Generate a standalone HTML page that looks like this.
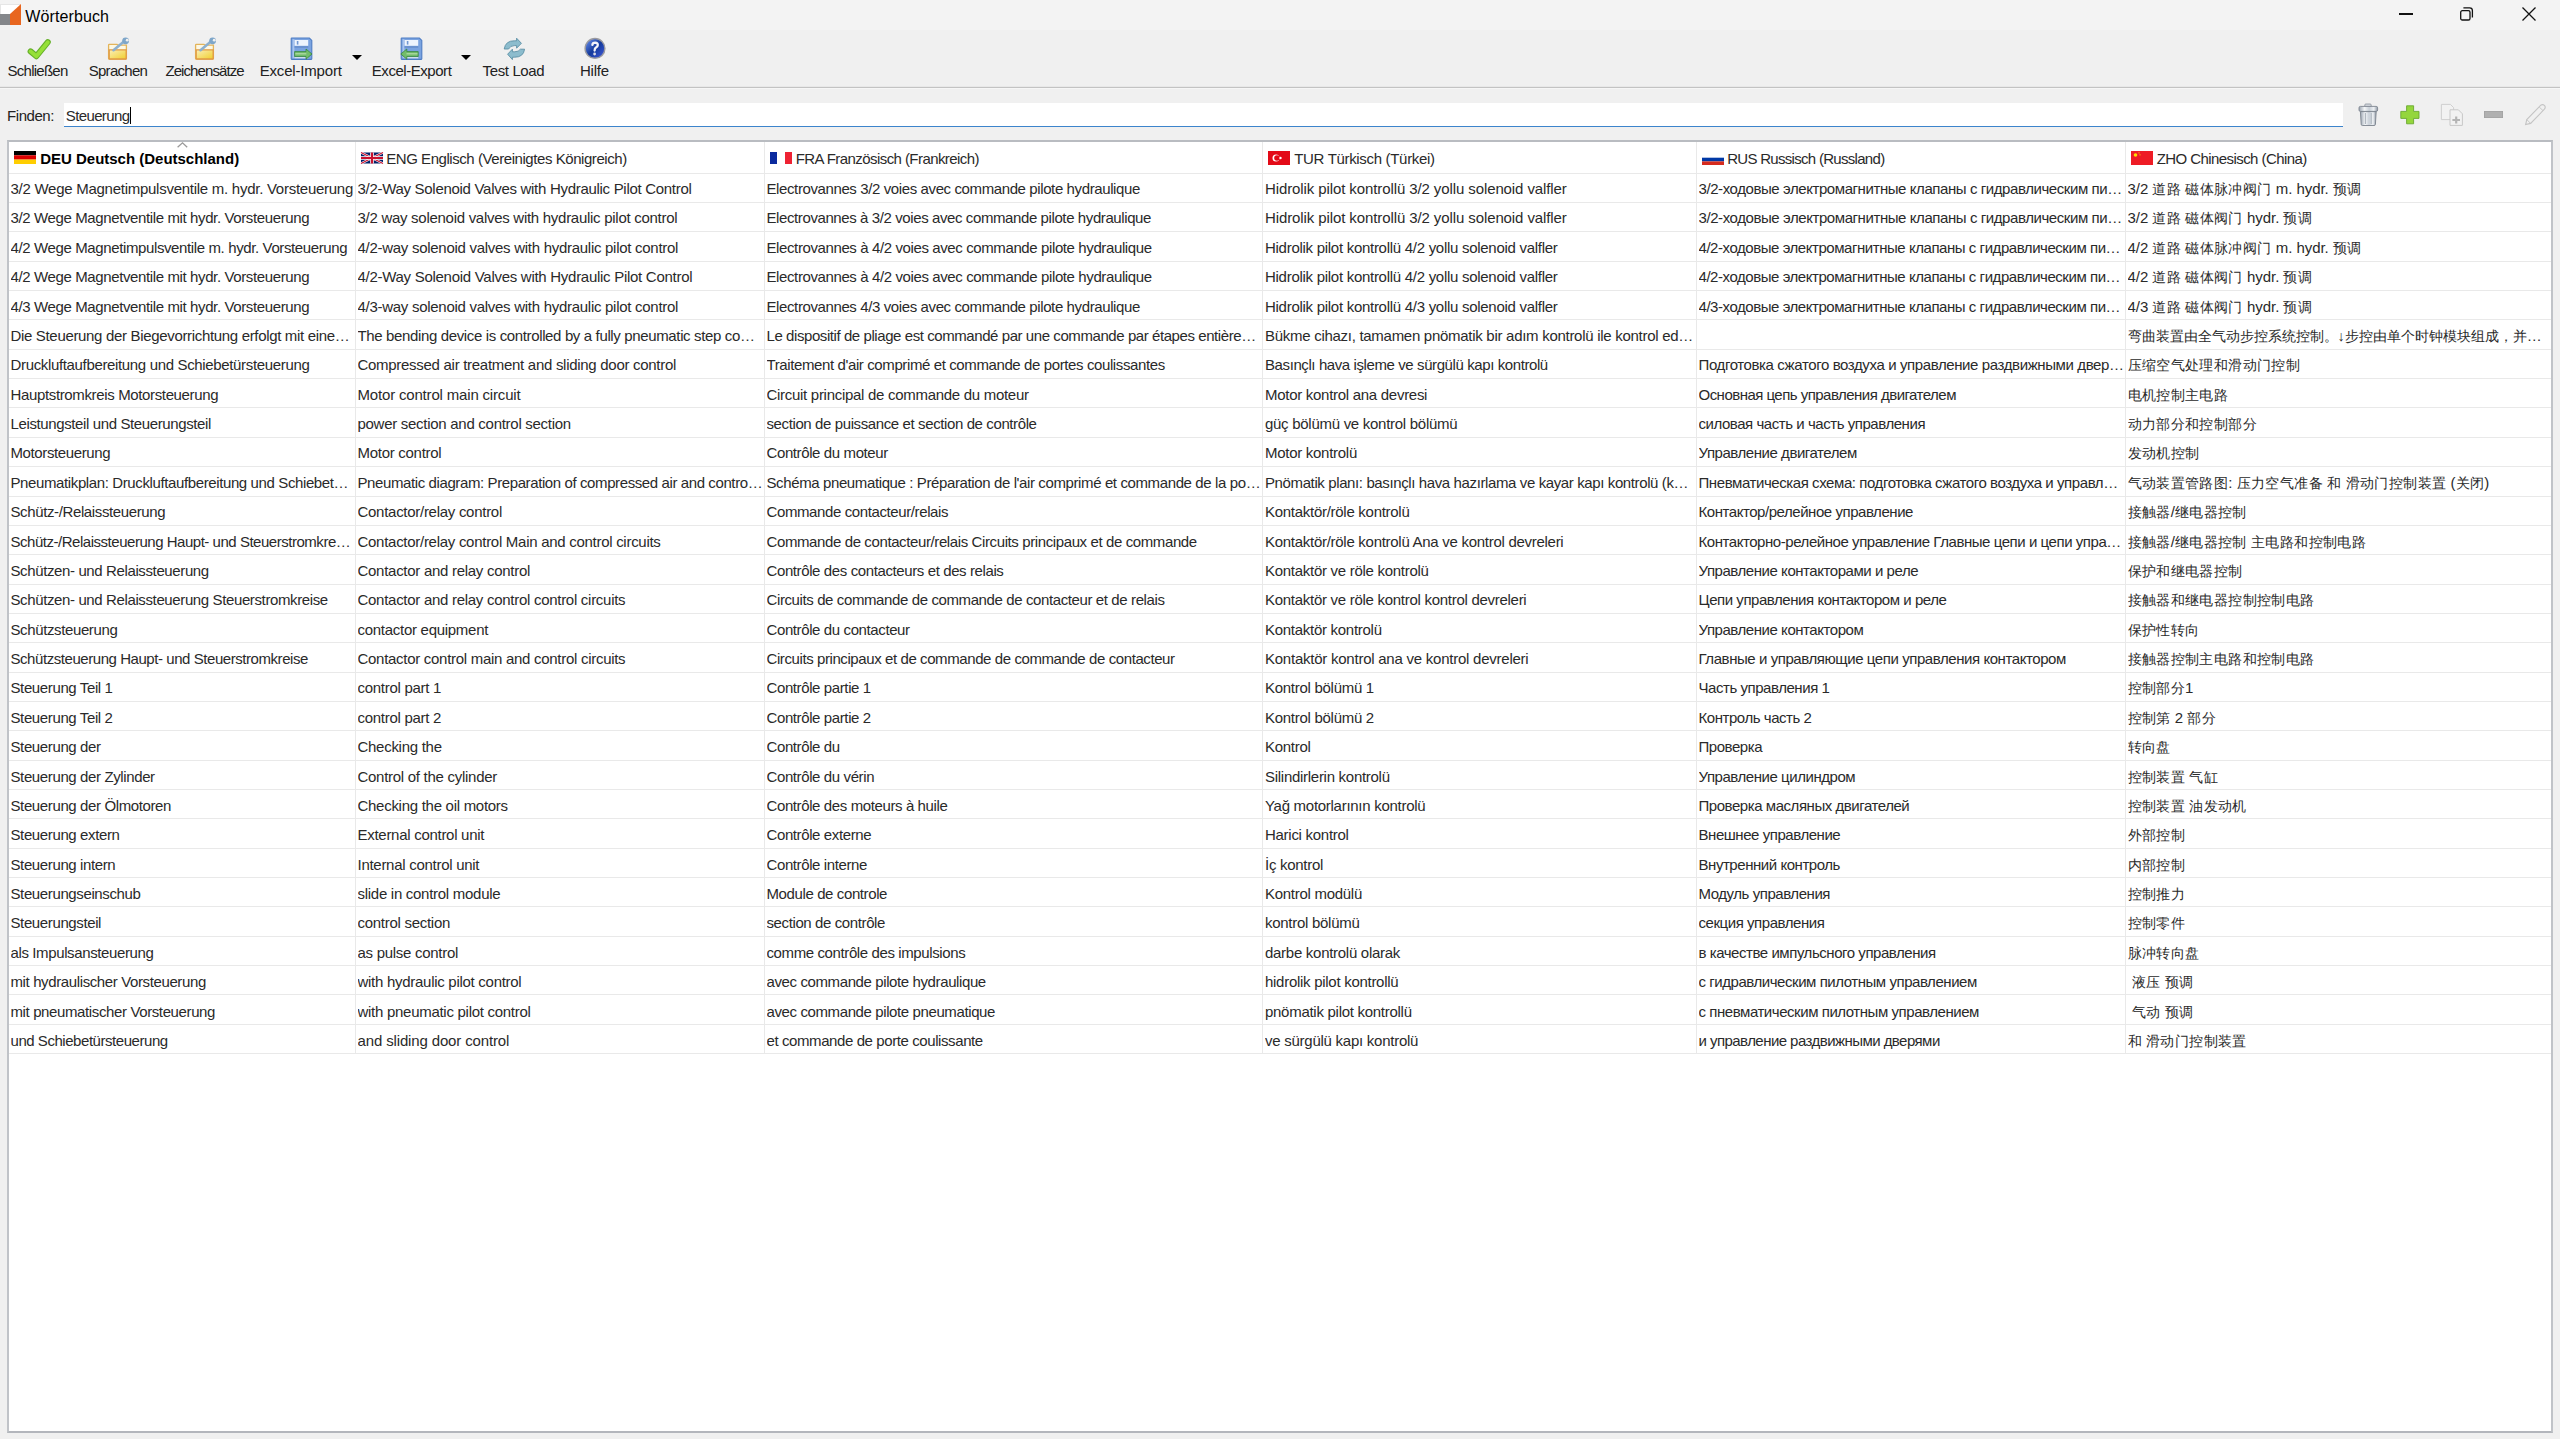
<!DOCTYPE html><html><head><meta charset="utf-8"><style>
html,body{margin:0;padding:0}
body{width:2560px;height:1439px;overflow:hidden;position:relative;background:#f0f0f0;font-family:"Liberation Sans", sans-serif;color:#000}
.a{position:absolute}
.t{position:absolute;white-space:nowrap;line-height:1;font-size:15px;letter-spacing:-0.25px;color:#2a2a2a}
.tb{position:absolute;white-space:nowrap;line-height:1;font-size:14px;letter-spacing:-0.3px;color:#222}
.hl{position:absolute;height:1px;background:#e9e9e9}
.vl{position:absolute;width:1px;background:#e9e9e9}
svg{position:absolute;overflow:visible}
.cj{font-size:14.4px;letter-spacing:0.4px}

</style></head><body>
<div class="a" style="left:0;top:0;width:2560px;height:30px;background:#f3f3f3"></div>
<svg style="left:0;top:4px" width="22" height="22" viewBox="0 0 22 22"><rect x="0" y="0" width="21" height="11" fill="#e6e6e6"/><rect x="1" y="1" width="20" height="10" fill="#ffffff"/><rect x="0" y="10" width="11" height="11" fill="#85878b"/><polygon points="10,10 21,0 21,21 10,21" fill="#e8661f"/></svg>
<div class="t" style="left:25.3px;top:9px;font-size:16px;letter-spacing:0.111px;color:#000">Wörterbuch</div>
<div class="a" style="left:2399px;top:13.2px;width:13.8px;height:1.7px;background:#111"></div>
<svg style="left:2458px;top:6px" width="18" height="18" viewBox="0 0 18 18"><rect x="2.7" y="4.7" width="9.3" height="9.3" rx="1.6" fill="none" stroke="#111" stroke-width="1.3"/><path d="M5.4 1.85 H11.6 Q14.4 1.85 14.4 4.6 V11.4" fill="none" stroke="#111" stroke-width="1.3"/></svg>
<svg style="left:2520.6px;top:6px" width="16" height="16" viewBox="0 0 16 16"><path d="M1.5 1.5 L14.5 14.5 M14.5 1.5 L1.5 14.5" stroke="#111" stroke-width="1.3"/></svg>
<div class="a" style="left:0;top:86px;width:2560px;height:1px;background:#e8e8e8"></div>
<div class="a" style="left:0;top:87px;width:2560px;height:1px;background:#c3c3c3"></div>
<div class="a" style="left:0;top:88px;width:2560px;height:1px;background:#f6f6f6"></div>
<div class="tb" style="left:7.6px;top:63px;font-size:15px;letter-spacing:-0.75px">Schließen</div>
<div class="tb" style="left:88.7px;top:63px;font-size:15px;letter-spacing:-0.714px">Sprachen</div>
<div class="tb" style="left:165.4px;top:63px;font-size:15px;letter-spacing:-0.909px">Zeichensätze</div>
<div class="tb" style="left:259.7px;top:63px;font-size:15px;letter-spacing:-0.182px">Excel-Import</div>
<div class="tb" style="left:371.8px;top:63px;font-size:15px;letter-spacing:-0.455px">Excel-Export</div>
<div class="tb" style="left:482.6px;top:63px;font-size:15px;letter-spacing:-0.374px">Test Load</div>
<div class="tb" style="left:580.0px;top:63px;font-size:15px;letter-spacing:-0.25px">Hilfe</div>
<svg style="left:20px;top:32px" width="40" height="32" viewBox="0 0 40 32"><path d="M10.6 19.4 L16.4 24.2 L27.8 10.2" fill="none" stroke="#66b02a" stroke-width="6" stroke-linecap="round" stroke-linejoin="round"/><path d="M10.6 19.4 L16.4 24.2 L27.8 10.2" fill="none" stroke="#96e038" stroke-width="3.8" stroke-linecap="round" stroke-linejoin="round"/></svg>
<svg style="left:100px;top:32px" width="40" height="32" viewBox="0 0 40 32"><defs><linearGradient id="fg" x1="0" y1="0" x2="1" y2="1"><stop offset="0" stop-color="#fbefb8"/><stop offset="1" stop-color="#f0cf2c"/></linearGradient></defs><path d="M8.6 13 Q8.6 12.4 9.2 12.4 H17 L18 13.2 H26.4 V26.6 Q26.4 27.2 25.8 27.2 H9.2 Q8.6 27.2 8.6 26.6 Z" fill="#fdf8e4" stroke="#e3b45a" stroke-width="1.3"/><path d="M9.2 17.8 H26.2 V26.6 Q26.2 27 25.8 27 H9.6 Q9.2 27 9.2 26.6 Z" fill="url(#fg)" stroke="#e19a45" stroke-width="1.3"/><path d="M13.5 18.2 L24.5 9" stroke="#8db0cf" stroke-width="2.6" stroke-linecap="round"/><circle cx="25.6" cy="8.8" r="3.4" fill="#7ea6c9"/><circle cx="27.2" cy="8.2" r="1.4" fill="#f0f0f0"/></svg>
<svg style="left:187px;top:32px" width="40" height="32" viewBox="0 0 40 32"><defs><linearGradient id="fg" x1="0" y1="0" x2="1" y2="1"><stop offset="0" stop-color="#fbefb8"/><stop offset="1" stop-color="#f0cf2c"/></linearGradient></defs><path d="M8.6 13 Q8.6 12.4 9.2 12.4 H17 L18 13.2 H26.4 V26.6 Q26.4 27.2 25.8 27.2 H9.2 Q8.6 27.2 8.6 26.6 Z" fill="#fdf8e4" stroke="#e3b45a" stroke-width="1.3"/><path d="M9.2 17.8 H26.2 V26.6 Q26.2 27 25.8 27 H9.6 Q9.2 27 9.2 26.6 Z" fill="url(#fg)" stroke="#e19a45" stroke-width="1.3"/><path d="M13.5 18.2 L24.5 9" stroke="#8db0cf" stroke-width="2.6" stroke-linecap="round"/><circle cx="25.6" cy="8.8" r="3.4" fill="#7ea6c9"/><circle cx="27.2" cy="8.2" r="1.4" fill="#f0f0f0"/></svg>
<svg style="left:285px;top:32px" width="40" height="32" viewBox="0 0 40 32"><path d="M6.2 6.6 Q6.2 6 6.8 6 H24.4 L26.8 8.4 V26.8 Q26.8 27.4 26.2 27.4 H6.8 Q6.2 27.4 6.2 26.8 Z" fill="#7aa3e0" stroke="#4d7cc4" stroke-width="1.1"/><rect x="7.6" y="7.2" width="1.8" height="19" fill="#a9c4ee"/><rect x="9.6" y="8" width="13.6" height="5.8" fill="#eef4fd"/><rect x="11.8" y="9" width="1.6" height="3.6" fill="#6f97d2"/><rect x="9.6" y="14" width="13.6" height="2" fill="#6a92d0"/><rect x="9.6" y="25" width="13.6" height="1.3" fill="#dbe6f7"/><path d="M9.6 19.6 H21 V17 L27 22 L21 27.2 V24.6 H9.6 Z" fill="#72bd6a" stroke="#2f7f2f" stroke-width="0.7"/><rect x="10.3" y="21" width="11" height="1.5" fill="#a5d59c"/></svg>
<svg style="left:395px;top:32px" width="40" height="32" viewBox="0 0 40 32"><path d="M6.2 6.6 Q6.2 6 6.8 6 H24.4 L26.8 8.4 V26.8 Q26.8 27.4 26.2 27.4 H6.8 Q6.2 27.4 6.2 26.8 Z" fill="#7aa3e0" stroke="#4d7cc4" stroke-width="1.1"/><rect x="7.6" y="7.2" width="1.8" height="19" fill="#a9c4ee"/><rect x="9.6" y="8" width="13.6" height="5.8" fill="#eef4fd"/><rect x="11.8" y="9" width="1.6" height="3.6" fill="#6f97d2"/><rect x="9.6" y="14" width="13.6" height="2" fill="#6a92d0"/><rect x="9.6" y="25" width="13.6" height="1.3" fill="#dbe6f7"/><path d="M23.2 19.6 H11.8 V17 L5.8 22 L11.8 27.2 V24.6 H23.2 Z" fill="#72bd6a" stroke="#2f7f2f" stroke-width="0.7"/><rect x="11.5" y="21" width="11" height="1.5" fill="#a5d59c"/></svg>
<svg style="left:351px;top:54px" width="12" height="8" viewBox="0 0 12 8"><path d="M1 1 H11 L6 6 Z" fill="#000"/></svg>
<svg style="left:460px;top:54px" width="12" height="8" viewBox="0 0 12 8"><path d="M1 1 H11 L6 6 Z" fill="#000"/></svg>
<svg style="left:498px;top:32px" width="40" height="32" viewBox="0 0 40 32"><path d="M6.2 17 Q7.5 8.6 16.5 8.8 H18.6 V6.2 L23.4 11.3 L18.6 16.2 V13.6 H16.4 Q12.2 13.6 10.6 17 Z" fill="#8cbccd" stroke="#5a8fa5" stroke-width="0.9" stroke-linejoin="round"/><path d="M26.6 17.2 Q25.4 25.4 16.4 25.2 H14.4 V27.6 L9.6 22.2 L14.4 17.2 V19.8 H16.6 Q20.8 19.8 22.4 17.2 Z" fill="#8cbccd" stroke="#5a8fa5" stroke-width="0.9" stroke-linejoin="round"/></svg>
<svg style="left:575px;top:32px" width="40" height="32" viewBox="0 0 40 32"><defs><linearGradient id="hg" x1="0.1" y1="0.1" x2="0.9" y2="0.9"><stop offset="0" stop-color="#5f86e6"/><stop offset="0.5" stop-color="#143a9c"/><stop offset="1" stop-color="#3a55d0"/></linearGradient></defs><circle cx="20" cy="16.4" r="9.9" fill="url(#hg)" stroke="#9a9aa0" stroke-width="1.4"/><path d="M17.4 12.8 Q17.6 10.6 20.2 10.6 Q22.8 10.7 22.8 13 Q22.8 14.6 21 15.6 Q19.6 16.4 19.6 18.6" fill="none" stroke="#f4f4fa" stroke-width="2.3" stroke-linecap="round"/><circle cx="19.6" cy="22" r="1.4" fill="#dcdce6"/></svg>
<div class="tb" style="left:7px;top:108px;font-size:15px;letter-spacing:-0.434px">Finden:</div>
<div class="a" style="left:64px;top:103px;width:2279px;height:22.5px;background:#fff;border-bottom:1.5px solid #3c84cc"></div>
<div class="t" style="left:65.8px;top:107.5px;font-size:15px;letter-spacing:-0.626px">Steuerung</div>
<div class="a" style="left:130px;top:107px;width:1px;height:17px;background:#000"></div>
<svg style="left:2358px;top:103px" width="21" height="24" viewBox="0 0 21 24"><defs><linearGradient id="tg" x1="0" y1="0" x2="1" y2="0"><stop offset="0" stop-color="#9aa4b0"/><stop offset="0.3" stop-color="#f4f6f8"/><stop offset="0.55" stop-color="#c9d0d8"/><stop offset="0.8" stop-color="#eef1f4"/><stop offset="1" stop-color="#8d97a3"/></linearGradient></defs><rect x="6.8" y="1" width="6.4" height="3" rx="1" fill="#d4d9df" stroke="#8a929c" stroke-width="0.8"/><rect x="1" y="3.4" width="18.6" height="5" rx="1.4" fill="url(#tg)" stroke="#7d8590" stroke-width="0.9"/><path d="M2.4 8.6 H18.2 L17.4 21.4 Q17.3 22.5 16.2 22.5 H4.4 Q3.3 22.5 3.2 21.4 Z" fill="url(#tg)" stroke="#7a828c" stroke-width="0.9"/><path d="M7.4 10 V21 M13.2 10 V21" stroke="#a9b1ba" stroke-width="1"/></svg>
<svg style="left:2400px;top:105px" width="20" height="20" viewBox="0 0 20 20"><path d="M6.6 0.8 H13.6 V6.4 H19 V13.4 H13.6 V18.8 H6.6 V13.4 H0.8 V6.4 H6.6 Z" fill="#94d63c" stroke="#6aa830" stroke-width="0.9"/></svg>
<svg style="left:2440px;top:103px" width="24" height="24" viewBox="0 0 24 24"><path d="M1.4 1.4 H10.4 L13.6 4.6 V16.6 H1.4 Z" fill="#f2f2f2" stroke="#cfcfcf" stroke-width="1"/><path d="M10 6.8 H18.4 L22.4 10.8 V22.4 H10 Z" fill="#f2f2f2" stroke="#c8c8c8" stroke-width="1"/><path d="M16.2 13.4 V20.6 M12.4 17 H20" stroke="#b4b4b4" stroke-width="2.2"/></svg>
<div class="a" style="left:2484.4px;top:111px;width:18.3px;height:7.3px;background:#b0b0b0;box-shadow:inset 0 0 0 0.8px #a2a2a2"></div>
<svg style="left:2524px;top:103px" width="23" height="24" viewBox="0 0 23 24"><path d="M1.6 21.6 L2.8 16.6 L16.6 2.4 Q18.6 0.8 20.4 2.4 Q22 4.2 20.4 6.2 L6.6 20.4 Z" fill="#f0f0f0" stroke="#c4c4c4" stroke-width="1.1"/><path d="M15.2 4 L19 7.6 M2.8 16.6 L6.6 20.4" stroke="#c8c8c8" stroke-width="1"/></svg>
<div class="a" style="left:7px;top:140px;width:2542px;height:1289px;background:#fff;border:2px solid #c0c3c8;border-top-color:#b9bcc1;border-bottom-color:#b3b6bc"></div>
<div class="hl" style="left:9px;top:173px;width:2542px"></div>
<div class="hl" style="left:9px;top:202px;width:2542px"></div>
<div class="hl" style="left:9px;top:231px;width:2542px"></div>
<div class="hl" style="left:9px;top:261px;width:2542px"></div>
<div class="hl" style="left:9px;top:290px;width:2542px"></div>
<div class="hl" style="left:9px;top:319px;width:2542px"></div>
<div class="hl" style="left:9px;top:349px;width:2542px"></div>
<div class="hl" style="left:9px;top:378px;width:2542px"></div>
<div class="hl" style="left:9px;top:407px;width:2542px"></div>
<div class="hl" style="left:9px;top:437px;width:2542px"></div>
<div class="hl" style="left:9px;top:466px;width:2542px"></div>
<div class="hl" style="left:9px;top:496px;width:2542px"></div>
<div class="hl" style="left:9px;top:525px;width:2542px"></div>
<div class="hl" style="left:9px;top:554px;width:2542px"></div>
<div class="hl" style="left:9px;top:584px;width:2542px"></div>
<div class="hl" style="left:9px;top:613px;width:2542px"></div>
<div class="hl" style="left:9px;top:642px;width:2542px"></div>
<div class="hl" style="left:9px;top:672px;width:2542px"></div>
<div class="hl" style="left:9px;top:701px;width:2542px"></div>
<div class="hl" style="left:9px;top:730px;width:2542px"></div>
<div class="hl" style="left:9px;top:760px;width:2542px"></div>
<div class="hl" style="left:9px;top:789px;width:2542px"></div>
<div class="hl" style="left:9px;top:818px;width:2542px"></div>
<div class="hl" style="left:9px;top:848px;width:2542px"></div>
<div class="hl" style="left:9px;top:877px;width:2542px"></div>
<div class="hl" style="left:9px;top:906px;width:2542px"></div>
<div class="hl" style="left:9px;top:936px;width:2542px"></div>
<div class="hl" style="left:9px;top:965px;width:2542px"></div>
<div class="hl" style="left:9px;top:994px;width:2542px"></div>
<div class="hl" style="left:9px;top:1024px;width:2542px"></div>
<div class="hl" style="left:9px;top:1053px;width:2542px"></div>
<div class="vl" style="left:355px;top:142px;height:911.00px"></div>
<div class="vl" style="left:764px;top:142px;height:911.00px"></div>
<div class="vl" style="left:1262px;top:142px;height:911.00px"></div>
<div class="vl" style="left:1696px;top:142px;height:911.00px"></div>
<div class="vl" style="left:2125px;top:142px;height:911.00px"></div>
<svg style="left:14px;top:151px" width="22" height="13" viewBox="0 0 22 13"><rect width="22" height="4.3" fill="#000"/><rect y="4.3" width="22" height="4.3" fill="#dd0000"/><rect y="8.6" width="22" height="4.4" fill="#ffce00"/></svg>
<svg style="left:361px;top:152px" width="22" height="12" viewBox="0 0 60 30"><rect width="60" height="30" fill="#012169"/><path d="M0,0 L60,30 M60,0 L0,30" stroke="#fff" stroke-width="6"/><path d="M0,0 L60,30 M60,0 L0,30" stroke="#C8102E" stroke-width="3"/><path d="M30,0 V30 M0,15 H60" stroke="#fff" stroke-width="10"/><path d="M30,0 V30 M0,15 H60" stroke="#C8102E" stroke-width="6"/></svg>
<svg style="left:770px;top:152px" width="22" height="12" viewBox="0 0 22 12"><rect width="7" height="12" fill="#0b2a9e"/><rect x="15" width="7" height="12" fill="#ee2233"/></svg>
<svg style="left:1268px;top:150.5px" width="22" height="14" viewBox="0 0 22 14"><rect width="22" height="14" fill="#e30a17"/><circle cx="8" cy="7" r="3.5" fill="#fff"/><circle cx="9" cy="7" r="2.8" fill="#e30a17"/><circle cx="12.5" cy="7" r="1.2" fill="#fff"/></svg>
<svg style="left:1702px;top:153.5px" width="22" height="11" viewBox="0 0 22 11"><rect width="22" height="3.7" fill="#fff"/><rect y="3.7" width="22" height="3.7" fill="#0039a6"/><rect y="7.4" width="22" height="3.6" fill="#d52b1e"/></svg>
<svg style="left:2131px;top:150.5px" width="22" height="14" viewBox="0 0 22 14"><rect width="22" height="14" fill="#ee1c25"/><circle cx="4.5" cy="4" r="1.8" fill="#ffde00"/><circle cx="8" cy="1.8" r="0.6" fill="#ffde00"/><circle cx="9" cy="3.8" r="0.6" fill="#ffde00"/></svg>
<div class="t" style="left:40.2px;top:151px;font-weight:bold;letter-spacing:-0.01px;color:#000">DEU Deutsch (Deutschland)</div>
<div class="t" style="left:386.2px;top:151px;letter-spacing:-0.44px">ENG Englisch (Vereinigtes Königreich)</div>
<div class="t" style="left:795.7px;top:151px;letter-spacing:-0.57px">FRA Französisch (Frankreich)</div>
<div class="t" style="left:1294.2px;top:151px;letter-spacing:-0.32px">TUR Türkisch (Türkei)</div>
<div class="t" style="left:1727.2px;top:151px;letter-spacing:-0.701px">RUS Russisch (Russland)</div>
<div class="t" style="left:2156.7px;top:151px;letter-spacing:-0.571px">ZHO Chinesisch (China)</div>
<svg style="left:176px;top:141px" width="13" height="8" viewBox="0 0 13 8"><path d="M1.6 6.3 L6.5 1.8 L11.2 6.3" fill="none" stroke="#9a9a9a" stroke-width="1.3"/></svg>
<div class="t" style="left:10.5px;top:181.31px;width:344.0px;overflow:hidden;padding-bottom:6px;letter-spacing:-0.265px">3/2 Wege Magnetimpulsventile m. hydr. Vorsteuerung</div>
<div class="t" style="left:357.5px;top:181.31px;width:406.0px;overflow:hidden;padding-bottom:6px;letter-spacing:-0.294px">3/2-Way Solenoid Valves with Hydraulic Pilot Control</div>
<div class="t" style="left:766.5px;top:181.31px;width:495.0px;overflow:hidden;padding-bottom:6px;letter-spacing:-0.39px">Electrovannes 3/2 voies avec commande pilote hydraulique</div>
<div class="t" style="left:1265.0px;top:181.31px;width:430.5px;overflow:hidden;padding-bottom:6px;letter-spacing:-0.1px">Hidrolik pilot kontrollü 3/2 yollu solenoid valfler</div>
<div class="t" style="left:1698.5px;top:181.31px;width:426.0px;overflow:hidden;padding-bottom:6px;letter-spacing:-0.421px">3/2-ходовые электромагнитные клапаны с гидравлическим пи…</div>
<div class="t" style="left:2127.5px;top:181.31px;width:423.0px;overflow:hidden;padding-bottom:6px;letter-spacing:-0.05px">3/2 <span class="cj">道路</span> <span class="cj">磁体脉冲阀门</span> m. hydr. <span class="cj">预调</span></div>
<div class="t" style="left:10.5px;top:210.31px;width:344.0px;overflow:hidden;padding-bottom:6px;letter-spacing:-0.38px">3/2 Wege Magnetventile mit hydr. Vorsteuerung</div>
<div class="t" style="left:357.5px;top:210.31px;width:406.0px;overflow:hidden;padding-bottom:6px;letter-spacing:-0.28px">3/2 way solenoid valves with hydraulic pilot control</div>
<div class="t" style="left:766.5px;top:210.31px;width:495.0px;overflow:hidden;padding-bottom:6px;letter-spacing:-0.401px">Electrovannes à 3/2 voies avec commande pilote hydraulique</div>
<div class="t" style="left:1265.0px;top:210.31px;width:430.5px;overflow:hidden;padding-bottom:6px;letter-spacing:-0.1px">Hidrolik pilot kontrollü 3/2 yollu solenoid valfler</div>
<div class="t" style="left:1698.5px;top:210.31px;width:426.0px;overflow:hidden;padding-bottom:6px;letter-spacing:-0.421px">3/2-ходовые электромагнитные клапаны с гидравлическим пи…</div>
<div class="t" style="left:2127.5px;top:210.31px;width:423.0px;overflow:hidden;padding-bottom:6px;letter-spacing:-0.05px">3/2 <span class="cj">道路</span> <span class="cj">磁体阀门</span> hydr. <span class="cj">预调</span></div>
<div class="t" style="left:10.5px;top:240.31px;width:344.0px;overflow:hidden;padding-bottom:6px;letter-spacing:-0.38px">4/2 Wege Magnetimpulsventile m. hydr. Vorsteuerung</div>
<div class="t" style="left:357.5px;top:240.31px;width:406.0px;overflow:hidden;padding-bottom:6px;letter-spacing:-0.28px">4/2-way solenoid valves with hydraulic pilot control</div>
<div class="t" style="left:766.5px;top:240.31px;width:495.0px;overflow:hidden;padding-bottom:6px;letter-spacing:-0.39px">Electrovannes à 4/2 voies avec commande pilote hydraulique</div>
<div class="t" style="left:1265.0px;top:240.31px;width:430.5px;overflow:hidden;padding-bottom:6px;letter-spacing:-0.28px">Hidrolik pilot kontrollü 4/2 yollu solenoid valfler</div>
<div class="t" style="left:1698.5px;top:240.31px;width:426.0px;overflow:hidden;padding-bottom:6px;letter-spacing:-0.45px">4/2-ходовые электромагнитные клапаны с гидравлическим пи…</div>
<div class="t" style="left:2127.5px;top:240.31px;width:423.0px;overflow:hidden;padding-bottom:6px;letter-spacing:-0.05px">4/2 <span class="cj">道路</span> <span class="cj">磁体脉冲阀门</span> m. hydr. <span class="cj">预调</span></div>
<div class="t" style="left:10.5px;top:269.31px;width:344.0px;overflow:hidden;padding-bottom:6px;letter-spacing:-0.38px">4/2 Wege Magnetventile mit hydr. Vorsteuerung</div>
<div class="t" style="left:357.5px;top:269.31px;width:406.0px;overflow:hidden;padding-bottom:6px;letter-spacing:-0.28px">4/2-Way Solenoid Valves with Hydraulic Pilot Control</div>
<div class="t" style="left:766.5px;top:269.31px;width:495.0px;overflow:hidden;padding-bottom:6px;letter-spacing:-0.39px">Electrovannes à 4/2 voies avec commande pilote hydraulique</div>
<div class="t" style="left:1265.0px;top:269.31px;width:430.5px;overflow:hidden;padding-bottom:6px;letter-spacing:-0.28px">Hidrolik pilot kontrollü 4/2 yollu solenoid valfler</div>
<div class="t" style="left:1698.5px;top:269.31px;width:426.0px;overflow:hidden;padding-bottom:6px;letter-spacing:-0.45px">4/2-ходовые электромагнитные клапаны с гидравлическим пи…</div>
<div class="t" style="left:2127.5px;top:269.31px;width:423.0px;overflow:hidden;padding-bottom:6px;letter-spacing:-0.05px">4/2 <span class="cj">道路</span> <span class="cj">磁体阀门</span> hydr. <span class="cj">预调</span></div>
<div class="t" style="left:10.5px;top:299.31px;width:344.0px;overflow:hidden;padding-bottom:6px;letter-spacing:-0.38px">4/3 Wege Magnetventile mit hydr. Vorsteuerung</div>
<div class="t" style="left:357.5px;top:299.31px;width:406.0px;overflow:hidden;padding-bottom:6px;letter-spacing:-0.28px">4/3-way solenoid valves with hydraulic pilot control</div>
<div class="t" style="left:766.5px;top:299.31px;width:495.0px;overflow:hidden;padding-bottom:6px;letter-spacing:-0.39px">Electrovannes 4/3 voies avec commande pilote hydraulique</div>
<div class="t" style="left:1265.0px;top:299.31px;width:430.5px;overflow:hidden;padding-bottom:6px;letter-spacing:-0.28px">Hidrolik pilot kontrollü 4/3 yollu solenoid valfler</div>
<div class="t" style="left:1698.5px;top:299.31px;width:426.0px;overflow:hidden;padding-bottom:6px;letter-spacing:-0.45px">4/3-ходовые электромагнитные клапаны с гидравлическим пи…</div>
<div class="t" style="left:2127.5px;top:299.31px;width:423.0px;overflow:hidden;padding-bottom:6px;letter-spacing:-0.05px">4/3 <span class="cj">道路</span> <span class="cj">磁体阀门</span> hydr. <span class="cj">预调</span></div>
<div class="t" style="left:10.5px;top:328.31px;width:344.0px;overflow:hidden;padding-bottom:6px;letter-spacing:-0.329px">Die Steuerung der Biegevorrichtung erfolgt mit eine…</div>
<div class="t" style="left:357.5px;top:328.31px;width:406.0px;overflow:hidden;padding-bottom:6px;letter-spacing:-0.361px">The bending device is controlled by a fully pneumatic step co…</div>
<div class="t" style="left:766.5px;top:328.31px;width:495.0px;overflow:hidden;padding-bottom:6px;letter-spacing:-0.426px">Le dispositif de pliage est commandé par une commande par étapes entière…</div>
<div class="t" style="left:1265.0px;top:328.31px;width:430.5px;overflow:hidden;padding-bottom:6px;letter-spacing:-0.282px">Bükme cihazı, tamamen pnömatik bir adım kontrolü ile kontrol ed…</div>
<div class="t" style="left:2127.5px;top:328.31px;width:423.0px;overflow:hidden;padding-bottom:6px;letter-spacing:-0.05px"><span class="cj" style="letter-spacing:0">弯曲装置由全气动步控系统控制。↓步控由单个时钟模块组成，并</span>…</div>
<div class="t" style="left:10.5px;top:357.31px;width:344.0px;overflow:hidden;padding-bottom:6px;letter-spacing:-0.344px">Druckluftaufbereitung und Schiebetürsteuerung</div>
<div class="t" style="left:357.5px;top:357.31px;width:406.0px;overflow:hidden;padding-bottom:6px;letter-spacing:-0.288px">Compressed air treatment and sliding door control</div>
<div class="t" style="left:766.5px;top:357.31px;width:495.0px;overflow:hidden;padding-bottom:6px;letter-spacing:-0.39px">Traitement d'air comprimé et commande de portes coulissantes</div>
<div class="t" style="left:1265.0px;top:357.31px;width:430.5px;overflow:hidden;padding-bottom:6px;letter-spacing:-0.404px">Basınçlı hava işleme ve sürgülü kapı kontrolü</div>
<div class="t" style="left:1698.5px;top:357.31px;width:426.0px;overflow:hidden;padding-bottom:6px;letter-spacing:-0.389px">Подготовка сжатого воздуха и управление раздвижными двер…</div>
<div class="t" style="left:2127.5px;top:357.31px;width:423.0px;overflow:hidden;padding-bottom:6px;letter-spacing:-0.05px"><span class="cj">压缩空气处理和滑动门控制</span></div>
<div class="t" style="left:10.5px;top:387.31px;width:344.0px;overflow:hidden;padding-bottom:6px;letter-spacing:-0.358px">Hauptstromkreis Motorsteuerung</div>
<div class="t" style="left:357.5px;top:387.31px;width:406.0px;overflow:hidden;padding-bottom:6px;letter-spacing:-0.176px">Motor control main circuit</div>
<div class="t" style="left:766.5px;top:387.31px;width:495.0px;overflow:hidden;padding-bottom:6px;letter-spacing:-0.289px">Circuit principal de commande du moteur</div>
<div class="t" style="left:1265.0px;top:387.31px;width:430.5px;overflow:hidden;padding-bottom:6px;letter-spacing:-0.283px">Motor kontrol ana devresi</div>
<div class="t" style="left:1698.5px;top:387.31px;width:426.0px;overflow:hidden;padding-bottom:6px;letter-spacing:-0.523px">Основная цепь управления двигателем</div>
<div class="t" style="left:2127.5px;top:387.31px;width:423.0px;overflow:hidden;padding-bottom:6px;letter-spacing:-0.05px"><span class="cj">电机控制主电路</span></div>
<div class="t" style="left:10.5px;top:416.31px;width:344.0px;overflow:hidden;padding-bottom:6px;letter-spacing:-0.38px">Leistungsteil und Steuerungsteil</div>
<div class="t" style="left:357.5px;top:416.31px;width:406.0px;overflow:hidden;padding-bottom:6px;letter-spacing:-0.28px">power section and control section</div>
<div class="t" style="left:766.5px;top:416.31px;width:495.0px;overflow:hidden;padding-bottom:6px;letter-spacing:-0.39px">section de puissance et section de contrôle</div>
<div class="t" style="left:1265.0px;top:416.31px;width:430.5px;overflow:hidden;padding-bottom:6px;letter-spacing:-0.28px">güç bölümü ve kontrol bölümü</div>
<div class="t" style="left:1698.5px;top:416.31px;width:426.0px;overflow:hidden;padding-bottom:6px;letter-spacing:-0.45px">силовая часть и часть управления</div>
<div class="t" style="left:2127.5px;top:416.31px;width:423.0px;overflow:hidden;padding-bottom:6px;letter-spacing:-0.05px"><span class="cj">动力部分和控制部分</span></div>
<div class="t" style="left:10.5px;top:445.31px;width:344.0px;overflow:hidden;padding-bottom:6px;letter-spacing:-0.38px">Motorsteuerung</div>
<div class="t" style="left:357.5px;top:445.31px;width:406.0px;overflow:hidden;padding-bottom:6px;letter-spacing:-0.28px">Motor control</div>
<div class="t" style="left:766.5px;top:445.31px;width:495.0px;overflow:hidden;padding-bottom:6px;letter-spacing:-0.39px">Contrôle du moteur</div>
<div class="t" style="left:1265.0px;top:445.31px;width:430.5px;overflow:hidden;padding-bottom:6px;letter-spacing:-0.28px">Motor kontrolü</div>
<div class="t" style="left:1698.5px;top:445.31px;width:426.0px;overflow:hidden;padding-bottom:6px;letter-spacing:-0.45px">Управление двигателем</div>
<div class="t" style="left:2127.5px;top:445.31px;width:423.0px;overflow:hidden;padding-bottom:6px;letter-spacing:-0.05px"><span class="cj">发动机控制</span></div>
<div class="t" style="left:10.5px;top:475.31px;width:344.0px;overflow:hidden;padding-bottom:6px;letter-spacing:-0.384px">Pneumatikplan: Druckluftaufbereitung und Schiebet…</div>
<div class="t" style="left:357.5px;top:475.31px;width:406.0px;overflow:hidden;padding-bottom:6px;letter-spacing:-0.396px">Pneumatic diagram: Preparation of compressed air and contro…</div>
<div class="t" style="left:766.5px;top:475.31px;width:495.0px;overflow:hidden;padding-bottom:6px;letter-spacing:-0.385px">Schéma pneumatique : Préparation de l'air comprimé et commande de la po…</div>
<div class="t" style="left:1265.0px;top:475.31px;width:430.5px;overflow:hidden;padding-bottom:6px;letter-spacing:-0.384px">Pnömatik planı: basınçlı hava hazırlama ve kayar kapı kontrolü (k…</div>
<div class="t" style="left:1698.5px;top:475.31px;width:426.0px;overflow:hidden;padding-bottom:6px;letter-spacing:-0.424px">Пневматическая схема: подготовка сжатого воздуха и управл…</div>
<div class="t" style="left:2127.5px;top:475.31px;width:423.0px;overflow:hidden;padding-bottom:6px;letter-spacing:-0.05px"><span class="cj">气动装置管路图</span>: <span class="cj">压力空气准备</span> <span class="cj">和</span> <span class="cj">滑动门控制装置</span> (<span class="cj">关闭</span>)</div>
<div class="t" style="left:10.5px;top:504.31px;width:344.0px;overflow:hidden;padding-bottom:6px;letter-spacing:-0.38px">Schütz-/Relaissteuerung</div>
<div class="t" style="left:357.5px;top:504.31px;width:406.0px;overflow:hidden;padding-bottom:6px;letter-spacing:-0.28px">Contactor/relay control</div>
<div class="t" style="left:766.5px;top:504.31px;width:495.0px;overflow:hidden;padding-bottom:6px;letter-spacing:-0.39px">Commande contacteur/relais</div>
<div class="t" style="left:1265.0px;top:504.31px;width:430.5px;overflow:hidden;padding-bottom:6px;letter-spacing:-0.28px">Kontaktör/röle kontrolü</div>
<div class="t" style="left:1698.5px;top:504.31px;width:426.0px;overflow:hidden;padding-bottom:6px;letter-spacing:-0.45px">Контактор/релейное управление</div>
<div class="t" style="left:2127.5px;top:504.31px;width:423.0px;overflow:hidden;padding-bottom:6px;letter-spacing:-0.05px"><span class="cj">接触器</span>/<span class="cj">继电器控制</span></div>
<div class="t" style="left:10.5px;top:534.31px;width:344.0px;overflow:hidden;padding-bottom:6px;letter-spacing:-0.474px">Schütz-/Relaissteuerung Haupt- und Steuerstromkre…</div>
<div class="t" style="left:357.5px;top:534.31px;width:406.0px;overflow:hidden;padding-bottom:6px;letter-spacing:-0.28px">Contactor/relay control Main and control circuits</div>
<div class="t" style="left:766.5px;top:534.31px;width:495.0px;overflow:hidden;padding-bottom:6px;letter-spacing:-0.39px">Commande de contacteur/relais Circuits principaux et de commande</div>
<div class="t" style="left:1265.0px;top:534.31px;width:430.5px;overflow:hidden;padding-bottom:6px;letter-spacing:-0.28px">Kontaktör/röle kontrolü Ana ve kontrol devreleri</div>
<div class="t" style="left:1698.5px;top:534.31px;width:426.0px;overflow:hidden;padding-bottom:6px;letter-spacing:-0.446px">Контакторно-релейное управление Главные цепи и цепи упра…</div>
<div class="t" style="left:2127.5px;top:534.31px;width:423.0px;overflow:hidden;padding-bottom:6px;letter-spacing:-0.05px"><span class="cj">接触器</span>/<span class="cj">继电器控制</span> <span class="cj">主电路和控制电路</span></div>
<div class="t" style="left:10.5px;top:563.31px;width:344.0px;overflow:hidden;padding-bottom:6px;letter-spacing:-0.38px">Schützen- und Relaissteuerung</div>
<div class="t" style="left:357.5px;top:563.31px;width:406.0px;overflow:hidden;padding-bottom:6px;letter-spacing:-0.28px">Contactor and relay control</div>
<div class="t" style="left:766.5px;top:563.31px;width:495.0px;overflow:hidden;padding-bottom:6px;letter-spacing:-0.39px">Contrôle des contacteurs et des relais</div>
<div class="t" style="left:1265.0px;top:563.31px;width:430.5px;overflow:hidden;padding-bottom:6px;letter-spacing:-0.28px">Kontaktör ve röle kontrolü</div>
<div class="t" style="left:1698.5px;top:563.31px;width:426.0px;overflow:hidden;padding-bottom:6px;letter-spacing:-0.45px">Управление контакторами и реле</div>
<div class="t" style="left:2127.5px;top:563.31px;width:423.0px;overflow:hidden;padding-bottom:6px;letter-spacing:-0.05px"><span class="cj">保护和继电器控制</span></div>
<div class="t" style="left:10.5px;top:592.31px;width:344.0px;overflow:hidden;padding-bottom:6px;letter-spacing:-0.38px">Schützen- und Relaissteuerung Steuerstromkreise</div>
<div class="t" style="left:357.5px;top:592.31px;width:406.0px;overflow:hidden;padding-bottom:6px;letter-spacing:-0.28px">Contactor and relay control control circuits</div>
<div class="t" style="left:766.5px;top:592.31px;width:495.0px;overflow:hidden;padding-bottom:6px;letter-spacing:-0.39px">Circuits de commande de commande de contacteur et de relais</div>
<div class="t" style="left:1265.0px;top:592.31px;width:430.5px;overflow:hidden;padding-bottom:6px;letter-spacing:-0.28px">Kontaktör ve röle kontrol kontrol devreleri</div>
<div class="t" style="left:1698.5px;top:592.31px;width:426.0px;overflow:hidden;padding-bottom:6px;letter-spacing:-0.45px">Цепи управления контактором и реле</div>
<div class="t" style="left:2127.5px;top:592.31px;width:423.0px;overflow:hidden;padding-bottom:6px;letter-spacing:-0.05px"><span class="cj">接触器和继电器控制控制电路</span></div>
<div class="t" style="left:10.5px;top:622.31px;width:344.0px;overflow:hidden;padding-bottom:6px;letter-spacing:-0.38px">Schützsteuerung</div>
<div class="t" style="left:357.5px;top:622.31px;width:406.0px;overflow:hidden;padding-bottom:6px;letter-spacing:-0.28px">contactor equipment</div>
<div class="t" style="left:766.5px;top:622.31px;width:495.0px;overflow:hidden;padding-bottom:6px;letter-spacing:-0.39px">Contrôle du contacteur</div>
<div class="t" style="left:1265.0px;top:622.31px;width:430.5px;overflow:hidden;padding-bottom:6px;letter-spacing:-0.28px">Kontaktör kontrolü</div>
<div class="t" style="left:1698.5px;top:622.31px;width:426.0px;overflow:hidden;padding-bottom:6px;letter-spacing:-0.45px">Управление контактором</div>
<div class="t" style="left:2127.5px;top:622.31px;width:423.0px;overflow:hidden;padding-bottom:6px;letter-spacing:-0.05px"><span class="cj">保护性转向</span></div>
<div class="t" style="left:10.5px;top:651.31px;width:344.0px;overflow:hidden;padding-bottom:6px;letter-spacing:-0.442px">Schützsteuerung Haupt- und Steuerstromkreise</div>
<div class="t" style="left:357.5px;top:651.31px;width:406.0px;overflow:hidden;padding-bottom:6px;letter-spacing:-0.286px">Contactor control main and control circuits</div>
<div class="t" style="left:766.5px;top:651.31px;width:495.0px;overflow:hidden;padding-bottom:6px;letter-spacing:-0.41px">Circuits principaux et de commande de commande de contacteur</div>
<div class="t" style="left:1265.0px;top:651.31px;width:430.5px;overflow:hidden;padding-bottom:6px;letter-spacing:-0.239px">Kontaktör kontrol ana ve kontrol devreleri</div>
<div class="t" style="left:1698.5px;top:651.31px;width:426.0px;overflow:hidden;padding-bottom:6px;letter-spacing:-0.428px">Главные и управляющие цепи управления контактором</div>
<div class="t" style="left:2127.5px;top:651.31px;width:423.0px;overflow:hidden;padding-bottom:6px;letter-spacing:-0.05px"><span class="cj">接触器控制主电路和控制电路</span></div>
<div class="t" style="left:10.5px;top:680.31px;width:344.0px;overflow:hidden;padding-bottom:6px;letter-spacing:-0.38px">Steuerung Teil 1</div>
<div class="t" style="left:357.5px;top:680.31px;width:406.0px;overflow:hidden;padding-bottom:6px;letter-spacing:-0.28px">control part 1</div>
<div class="t" style="left:766.5px;top:680.31px;width:495.0px;overflow:hidden;padding-bottom:6px;letter-spacing:-0.39px">Contrôle partie 1</div>
<div class="t" style="left:1265.0px;top:680.31px;width:430.5px;overflow:hidden;padding-bottom:6px;letter-spacing:-0.28px">Kontrol bölümü 1</div>
<div class="t" style="left:1698.5px;top:680.31px;width:426.0px;overflow:hidden;padding-bottom:6px;letter-spacing:-0.45px">Часть управления 1</div>
<div class="t" style="left:2127.5px;top:680.31px;width:423.0px;overflow:hidden;padding-bottom:6px;letter-spacing:-0.05px"><span class="cj">控制部分</span>1</div>
<div class="t" style="left:10.5px;top:710.31px;width:344.0px;overflow:hidden;padding-bottom:6px;letter-spacing:-0.38px">Steuerung Teil 2</div>
<div class="t" style="left:357.5px;top:710.31px;width:406.0px;overflow:hidden;padding-bottom:6px;letter-spacing:-0.28px">control part 2</div>
<div class="t" style="left:766.5px;top:710.31px;width:495.0px;overflow:hidden;padding-bottom:6px;letter-spacing:-0.39px">Contrôle partie 2</div>
<div class="t" style="left:1265.0px;top:710.31px;width:430.5px;overflow:hidden;padding-bottom:6px;letter-spacing:-0.28px">Kontrol bölümü 2</div>
<div class="t" style="left:1698.5px;top:710.31px;width:426.0px;overflow:hidden;padding-bottom:6px;letter-spacing:-0.45px">Контроль часть 2</div>
<div class="t" style="left:2127.5px;top:710.31px;width:423.0px;overflow:hidden;padding-bottom:6px;letter-spacing:-0.05px"><span class="cj">控制第</span> 2 <span class="cj">部分</span></div>
<div class="t" style="left:10.5px;top:739.31px;width:344.0px;overflow:hidden;padding-bottom:6px;letter-spacing:-0.38px">Steuerung der</div>
<div class="t" style="left:357.5px;top:739.31px;width:406.0px;overflow:hidden;padding-bottom:6px;letter-spacing:-0.28px">Checking the</div>
<div class="t" style="left:766.5px;top:739.31px;width:495.0px;overflow:hidden;padding-bottom:6px;letter-spacing:-0.39px">Contrôle du</div>
<div class="t" style="left:1265.0px;top:739.31px;width:430.5px;overflow:hidden;padding-bottom:6px;letter-spacing:-0.28px">Kontrol</div>
<div class="t" style="left:1698.5px;top:739.31px;width:426.0px;overflow:hidden;padding-bottom:6px;letter-spacing:-0.45px">Проверка</div>
<div class="t" style="left:2127.5px;top:739.31px;width:423.0px;overflow:hidden;padding-bottom:6px;letter-spacing:-0.05px"><span class="cj">转向盘</span></div>
<div class="t" style="left:10.5px;top:769.31px;width:344.0px;overflow:hidden;padding-bottom:6px;letter-spacing:-0.38px">Steuerung der Zylinder</div>
<div class="t" style="left:357.5px;top:769.31px;width:406.0px;overflow:hidden;padding-bottom:6px;letter-spacing:-0.28px">Control of the cylinder</div>
<div class="t" style="left:766.5px;top:769.31px;width:495.0px;overflow:hidden;padding-bottom:6px;letter-spacing:-0.39px">Contrôle du vérin</div>
<div class="t" style="left:1265.0px;top:769.31px;width:430.5px;overflow:hidden;padding-bottom:6px;letter-spacing:-0.28px">Silindirlerin kontrolü</div>
<div class="t" style="left:1698.5px;top:769.31px;width:426.0px;overflow:hidden;padding-bottom:6px;letter-spacing:-0.45px">Управление цилиндром</div>
<div class="t" style="left:2127.5px;top:769.31px;width:423.0px;overflow:hidden;padding-bottom:6px;letter-spacing:-0.05px"><span class="cj">控制装置</span> <span class="cj">气缸</span></div>
<div class="t" style="left:10.5px;top:798.31px;width:344.0px;overflow:hidden;padding-bottom:6px;letter-spacing:-0.38px">Steuerung der Ölmotoren</div>
<div class="t" style="left:357.5px;top:798.31px;width:406.0px;overflow:hidden;padding-bottom:6px;letter-spacing:-0.28px">Checking the oil motors</div>
<div class="t" style="left:766.5px;top:798.31px;width:495.0px;overflow:hidden;padding-bottom:6px;letter-spacing:-0.39px">Contrôle des moteurs à huile</div>
<div class="t" style="left:1265.0px;top:798.31px;width:430.5px;overflow:hidden;padding-bottom:6px;letter-spacing:-0.28px">Yağ motorlarının kontrolü</div>
<div class="t" style="left:1698.5px;top:798.31px;width:426.0px;overflow:hidden;padding-bottom:6px;letter-spacing:-0.45px">Проверка масляных двигателей</div>
<div class="t" style="left:2127.5px;top:798.31px;width:423.0px;overflow:hidden;padding-bottom:6px;letter-spacing:-0.05px"><span class="cj">控制装置</span> <span class="cj">油发动机</span></div>
<div class="t" style="left:10.5px;top:827.31px;width:344.0px;overflow:hidden;padding-bottom:6px;letter-spacing:-0.38px">Steuerung extern</div>
<div class="t" style="left:357.5px;top:827.31px;width:406.0px;overflow:hidden;padding-bottom:6px;letter-spacing:-0.28px">External control unit</div>
<div class="t" style="left:766.5px;top:827.31px;width:495.0px;overflow:hidden;padding-bottom:6px;letter-spacing:-0.39px">Contrôle externe</div>
<div class="t" style="left:1265.0px;top:827.31px;width:430.5px;overflow:hidden;padding-bottom:6px;letter-spacing:-0.28px">Harici kontrol</div>
<div class="t" style="left:1698.5px;top:827.31px;width:426.0px;overflow:hidden;padding-bottom:6px;letter-spacing:-0.45px">Внешнее управление</div>
<div class="t" style="left:2127.5px;top:827.31px;width:423.0px;overflow:hidden;padding-bottom:6px;letter-spacing:-0.05px"><span class="cj">外部控制</span></div>
<div class="t" style="left:10.5px;top:857.31px;width:344.0px;overflow:hidden;padding-bottom:6px;letter-spacing:-0.38px">Steuerung intern</div>
<div class="t" style="left:357.5px;top:857.31px;width:406.0px;overflow:hidden;padding-bottom:6px;letter-spacing:-0.28px">Internal control unit</div>
<div class="t" style="left:766.5px;top:857.31px;width:495.0px;overflow:hidden;padding-bottom:6px;letter-spacing:-0.39px">Contrôle interne</div>
<div class="t" style="left:1265.0px;top:857.31px;width:430.5px;overflow:hidden;padding-bottom:6px;letter-spacing:-0.28px">İç kontrol</div>
<div class="t" style="left:1698.5px;top:857.31px;width:426.0px;overflow:hidden;padding-bottom:6px;letter-spacing:-0.45px">Внутренний контроль</div>
<div class="t" style="left:2127.5px;top:857.31px;width:423.0px;overflow:hidden;padding-bottom:6px;letter-spacing:-0.05px"><span class="cj">内部控制</span></div>
<div class="t" style="left:10.5px;top:886.31px;width:344.0px;overflow:hidden;padding-bottom:6px;letter-spacing:-0.38px">Steuerungseinschub</div>
<div class="t" style="left:357.5px;top:886.31px;width:406.0px;overflow:hidden;padding-bottom:6px;letter-spacing:-0.28px">slide in control module</div>
<div class="t" style="left:766.5px;top:886.31px;width:495.0px;overflow:hidden;padding-bottom:6px;letter-spacing:-0.39px">Module de controle</div>
<div class="t" style="left:1265.0px;top:886.31px;width:430.5px;overflow:hidden;padding-bottom:6px;letter-spacing:-0.28px">Kontrol modülü</div>
<div class="t" style="left:1698.5px;top:886.31px;width:426.0px;overflow:hidden;padding-bottom:6px;letter-spacing:-0.45px">Модуль управления</div>
<div class="t" style="left:2127.5px;top:886.31px;width:423.0px;overflow:hidden;padding-bottom:6px;letter-spacing:-0.05px"><span class="cj">控制推力</span></div>
<div class="t" style="left:10.5px;top:915.31px;width:344.0px;overflow:hidden;padding-bottom:6px;letter-spacing:-0.38px">Steuerungsteil</div>
<div class="t" style="left:357.5px;top:915.31px;width:406.0px;overflow:hidden;padding-bottom:6px;letter-spacing:-0.28px">control section</div>
<div class="t" style="left:766.5px;top:915.31px;width:495.0px;overflow:hidden;padding-bottom:6px;letter-spacing:-0.39px">section de contrôle</div>
<div class="t" style="left:1265.0px;top:915.31px;width:430.5px;overflow:hidden;padding-bottom:6px;letter-spacing:-0.28px">kontrol bölümü</div>
<div class="t" style="left:1698.5px;top:915.31px;width:426.0px;overflow:hidden;padding-bottom:6px;letter-spacing:-0.45px">секция управления</div>
<div class="t" style="left:2127.5px;top:915.31px;width:423.0px;overflow:hidden;padding-bottom:6px;letter-spacing:-0.05px"><span class="cj">控制零件</span></div>
<div class="t" style="left:10.5px;top:945.31px;width:344.0px;overflow:hidden;padding-bottom:6px;letter-spacing:-0.38px">als Impulsansteuerung</div>
<div class="t" style="left:357.5px;top:945.31px;width:406.0px;overflow:hidden;padding-bottom:6px;letter-spacing:-0.28px">as pulse control</div>
<div class="t" style="left:766.5px;top:945.31px;width:495.0px;overflow:hidden;padding-bottom:6px;letter-spacing:-0.39px">comme contrôle des impulsions</div>
<div class="t" style="left:1265.0px;top:945.31px;width:430.5px;overflow:hidden;padding-bottom:6px;letter-spacing:-0.28px">darbe kontrolü olarak</div>
<div class="t" style="left:1698.5px;top:945.31px;width:426.0px;overflow:hidden;padding-bottom:6px;letter-spacing:-0.45px">в качестве импульсного управления</div>
<div class="t" style="left:2127.5px;top:945.31px;width:423.0px;overflow:hidden;padding-bottom:6px;letter-spacing:-0.05px"><span class="cj">脉冲转向盘</span></div>
<div class="t" style="left:10.5px;top:974.31px;width:344.0px;overflow:hidden;padding-bottom:6px;letter-spacing:-0.38px">mit hydraulischer Vorsteuerung</div>
<div class="t" style="left:357.5px;top:974.31px;width:406.0px;overflow:hidden;padding-bottom:6px;letter-spacing:-0.28px">with hydraulic pilot control</div>
<div class="t" style="left:766.5px;top:974.31px;width:495.0px;overflow:hidden;padding-bottom:6px;letter-spacing:-0.39px">avec commande pilote hydraulique</div>
<div class="t" style="left:1265.0px;top:974.31px;width:430.5px;overflow:hidden;padding-bottom:6px;letter-spacing:-0.28px">hidrolik pilot kontrollü</div>
<div class="t" style="left:1698.5px;top:974.31px;width:426.0px;overflow:hidden;padding-bottom:6px;letter-spacing:-0.45px">с гидравлическим пилотным управлением</div>
<div class="t" style="left:2127.5px;top:974.31px;width:423.0px;overflow:hidden;padding-bottom:6px;letter-spacing:-0.05px">&nbsp;<span class="cj">液压</span> <span class="cj">预调</span></div>
<div class="t" style="left:10.5px;top:1004.31px;width:344.0px;overflow:hidden;padding-bottom:6px;letter-spacing:-0.38px">mit pneumatischer Vorsteuerung</div>
<div class="t" style="left:357.5px;top:1004.31px;width:406.0px;overflow:hidden;padding-bottom:6px;letter-spacing:-0.28px">with pneumatic pilot control</div>
<div class="t" style="left:766.5px;top:1004.31px;width:495.0px;overflow:hidden;padding-bottom:6px;letter-spacing:-0.39px">avec commande pilote pneumatique</div>
<div class="t" style="left:1265.0px;top:1004.31px;width:430.5px;overflow:hidden;padding-bottom:6px;letter-spacing:-0.28px">pnömatik pilot kontrollü</div>
<div class="t" style="left:1698.5px;top:1004.31px;width:426.0px;overflow:hidden;padding-bottom:6px;letter-spacing:-0.45px">с пневматическим пилотным управлением</div>
<div class="t" style="left:2127.5px;top:1004.31px;width:423.0px;overflow:hidden;padding-bottom:6px;letter-spacing:-0.05px">&nbsp;<span class="cj">气动</span> <span class="cj">预调</span></div>
<div class="t" style="left:10.5px;top:1033.31px;width:344.0px;overflow:hidden;padding-bottom:6px;letter-spacing:-0.455px">und Schiebetürsteuerung</div>
<div class="t" style="left:357.5px;top:1033.31px;width:406.0px;overflow:hidden;padding-bottom:6px;letter-spacing:-0.139px">and sliding door control</div>
<div class="t" style="left:766.5px;top:1033.31px;width:495.0px;overflow:hidden;padding-bottom:6px;letter-spacing:-0.407px">et commande de porte coulissante</div>
<div class="t" style="left:1265.0px;top:1033.31px;width:430.5px;overflow:hidden;padding-bottom:6px;letter-spacing:-0.253px">ve sürgülü kapı kontrolü</div>
<div class="t" style="left:1698.5px;top:1033.31px;width:426.0px;overflow:hidden;padding-bottom:6px;letter-spacing:-0.548px">и управление раздвижными дверями</div>
<div class="t" style="left:2127.5px;top:1033.31px;width:423.0px;overflow:hidden;padding-bottom:6px;letter-spacing:-0.05px"><span class="cj">和</span> <span class="cj">滑动门控制装置</span></div>
</body></html>
